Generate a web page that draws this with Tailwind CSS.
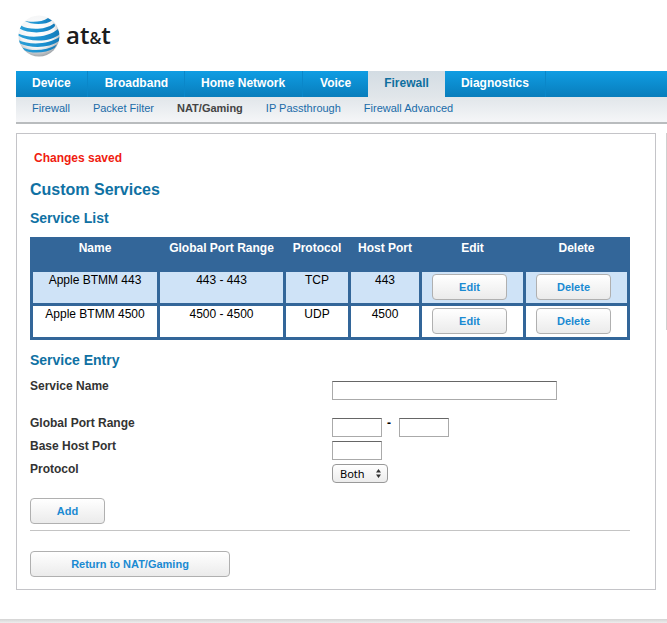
<!DOCTYPE html>
<html lang="en">
<head>
    <meta charset="UTF-8">
    <meta name="viewport" content="width=device-width, initial-scale=1.0">
    <title>Custom Services</title>
    <script src="https://cdn.jsdelivr.net/npm/@tailwindcss/browser@4"></script>
</head>
<body class="bg-white font-['Liberation_Sans',Arial,sans-serif] text-xs leading-4 text-black overflow-x-hidden">
    <header class="pl-4">
        <a href="#" class="flex h-[71px] items-center gap-1.5 pl-0.5 text-[#1c1c1c]" aria-label="at&amp;t">
            <svg class="size-[42px]" viewBox="0 0 42 42" aria-hidden="true">
                <defs>
                    <radialGradient id="ball" cx="45%" cy="38%" r="64%">
                        <stop offset="0" stop-color="#fff"/>
                        <stop offset=".65" stop-color="#f4f5f6"/>
                        <stop offset="1" stop-color="#9ba1a6"/>
                    </radialGradient>
                    <linearGradient id="stripe" x1="0" x2="1" y1="0" y2="0">
                        <stop offset="0" stop-color="#2b9fd6"/>
                        <stop offset=".6" stop-color="#1a90d0"/>
                        <stop offset="1" stop-color="#147ab8"/>
                    </linearGradient>
                    <clipPath id="disc"><circle cx="21" cy="21" r="20.5"/></clipPath>
                </defs>
                <circle cx="21" cy="21" r="20.5" fill="url(#ball)"/>
                <g fill="url(#stripe)" clip-path="url(#disc)">
                    <path d="M6 5.5 C12 7.5 24 7.5 30 3 L34 5.5 C28 10 14 10.5 6 5.5 Z"/>
                    <path d="M3 10.5 C10 15 27 15.5 36 8.5 C38 10 37 11.5 35 13 C27 19 10 18.5 1.5 13.5 Z"/>
                    <path d="M0 18.5 C10 23.5 30 23 40 14 L42 19 C33 27 12 28 0 20.5 Z"/>
                    <path d="M0 25 C12 30.5 31 29.5 42 21.5 L41 26 C32 33 13 34 1 28 Z"/>
                    <path d="M4 32.5 C14 36.5 28 36 39 29.5 L36.5 33 C28 38.5 13 39 6 35 Z"/>
                </g>
            </svg>
            <span class="font-['Open_Sans',sans-serif] text-2xl leading-8 font-semibold pb-0.5">at<span class="text-base">&amp;</span>t</span>
        </a>

        <nav class="flex h-[26px] bg-linear-to-b from-[#109de3] to-[#087dbc] font-bold text-white">
            <a href="#" class="border-r border-[#0a87c9] px-4 pt-1">Device</a>
            <a href="#" class="border-r border-[#0a87c9] pl-[17px] pr-4 pt-1">Broadband</a>
            <a href="#" class="border-r border-[#0a87c9] pl-4 pr-[17px] pt-1">Home Network</a>
            <a href="#" class="px-[17px] pt-1">Voice</a>
            <a href="#" class="bg-linear-to-b from-[#d3dce3] to-[#e1e6ea] px-4 pt-1 text-[#0f6f9f]">Firewall</a>
            <a href="#" class="border-r border-[#0a87c9] px-4 pt-1">Diagnostics</a>
        </nav>
        <nav class="flex h-[27px] gap-[23px] border-b-2 border-[#b9bcbe] bg-linear-to-b from-[#e1e6ea] to-[#f5f6f8] px-4 pt-[3px] text-[11px] text-[#1a6ba8]">
            <a href="#">Firewall</a>
            <a href="#">Packet Filter</a>
            <a href="#" class="font-bold text-[#444]">NAT/Gaming</a>
            <a href="#">IP Passthrough</a>
            <a href="#">Firewall Advanced</a>
        </nav>
    </header>

    <div class="flex items-start gap-2.5 pl-4 pt-[9px]">
        <main class="flex-1 border border-[#c4c4c8] pb-3 pl-[13px] pr-[25px] pt-4">
            <p class="pl-1 font-bold text-[#f01c10]">Changes saved</p>
            <h1 class="mt-3 text-base leading-6 font-bold text-[#0f71a3]">Custom Services</h1>
            <h2 class="mt-1.5 text-sm leading-5 font-bold text-[#0f71a3]">Service List</h2>

            <table class="mt-[9px] w-full table-fixed border-separate border-spacing-[3px] bg-[#336699] text-center">
                <colgroup>
                    <col class="w-[124px]">
                    <col class="w-[123px]">
                    <col class="w-[62px]">
                    <col class="w-[68px]">
                    <col class="w-[101px]">
                    <col>
                </colgroup>
                <thead>
                    <tr class="h-[29px] align-top whitespace-nowrap text-white">
                        <th>Name</th>
                        <th>Global Port Range</th>
                        <th>Protocol</th>
                        <th>Host Port</th>
                        <th>Edit</th>
                        <th>Delete</th>
                    </tr>
                </thead>
                <tbody>
                    <tr class="h-[31px] bg-[#cfe3f7] align-top">
                        <td>Apple BTMM 443</td>
                        <td>443 - 443</td>
                        <td>TCP</td>
                        <td>443</td>
                        <td class="pl-2.5 pt-0.5"><button class="block h-[26px] w-[75px] rounded border border-[#b0b0b0] bg-linear-to-b from-white to-[#ebebeb] text-[11px] font-bold text-[#1a8ad2]">Edit</button></td>
                        <td class="pl-2.5 pt-0.5"><button class="block h-[26px] w-[75px] rounded border border-[#b0b0b0] bg-linear-to-b from-white to-[#ebebeb] text-[11px] font-bold text-[#1a8ad2]">Delete</button></td>
                    </tr>
                    <tr class="h-[31px] bg-white align-top">
                        <td>Apple BTMM 4500</td>
                        <td>4500 - 4500</td>
                        <td>UDP</td>
                        <td>4500</td>
                        <td class="pl-2.5 pt-0.5"><button class="block h-[26px] w-[75px] rounded border border-[#b0b0b0] bg-linear-to-b from-white to-[#ebebeb] text-[11px] font-bold text-[#1a8ad2]">Edit</button></td>
                        <td class="pl-2.5 pt-0.5"><button class="block h-[26px] w-[75px] rounded border border-[#b0b0b0] bg-linear-to-b from-white to-[#ebebeb] text-[11px] font-bold text-[#1a8ad2]">Delete</button></td>
                    </tr>
                </tbody>
            </table>

            <h2 class="mt-2.5 text-sm leading-5 font-bold text-[#0f71a3]">Service Entry</h2>

            <form>
                <div class="mt-2 grid grid-cols-[302px_1fr] font-bold text-[#333]">
                    <label for="name" class="h-[37px]">Service Name</label>
                    <div class="pt-[3px]"><input id="name" type="text" class="block h-[19px] w-[225px] border border-[#aaa] border-t-[#666] bg-white px-1"></div>

                    <label for="port-from" class="h-[23px]">Global Port Range</label>
                    <div class="flex">
                        <input id="port-from" type="text" class="mt-[3px] h-[19px] w-[50px] border border-[#aaa] border-t-[#666] bg-white px-1">
                        <span class="w-[17px] pl-[5px] text-black">-</span>
                        <input type="text" aria-label="Global Port Range end" class="mt-[3px] h-[19px] w-[50px] border border-[#aaa] border-t-[#666] bg-white px-1">
                    </div>

                    <label for="host-port" class="h-[23px]">Base Host Port</label>
                    <div class="pt-[3px]"><input id="host-port" type="text" class="block h-[19px] w-[50px] border border-[#aaa] border-t-[#666] bg-white px-1"></div>

                    <label for="protocol" class="h-[23px]">Protocol</label>
                    <div class="pt-[3px]">
                        <div class="relative w-14">
                            <select id="protocol" class="block h-[19px] w-full appearance-none rounded border border-[#999] bg-linear-to-b from-white to-[#ececec] pl-[7px] font-['Noto_Sans',sans-serif] text-[11px] leading-4 font-normal text-black">
                                <option>Both</option>
                                <option>TCP</option>
                                <option>UDP</option>
                            </select>
                            <svg class="pointer-events-none absolute right-[7px] top-[5px] h-[9px] w-[5px] fill-[#333]" viewBox="0 0 5 9" aria-hidden="true">
                                <path d="M2.5 0 L5 3.5 H0 Z M0 5.5 H5 L2.5 9 Z"/>
                            </svg>
                        </div>
                    </div>
                </div>
                <button type="button" class="mt-3.5 block h-[26px] w-[75px] rounded border border-[#b0b0b0] bg-linear-to-b from-white to-[#ebebeb] text-[11px] font-bold text-[#1a8ad2]">Add</button>
            </form>

            <hr class="mt-1.5 border-[#c4c4c4]">
            <button type="button" class="mt-5 block h-[26px] w-[200px] rounded border border-[#b0b0b0] bg-linear-to-b from-white to-[#ebebeb] text-[11px] font-bold text-[#1a8ad2]">Return to NAT/Gaming</button>
        </main>
        <!-- side panel, cut off at the window edge -->
        <aside class="h-[197px] w-px border-l border-[#d0d0d0]"></aside>
    </div>

    <footer class="mt-[29px] h-1 bg-linear-to-b from-[#d4d4d4] to-[#eee]"></footer>
</body>
</html>
